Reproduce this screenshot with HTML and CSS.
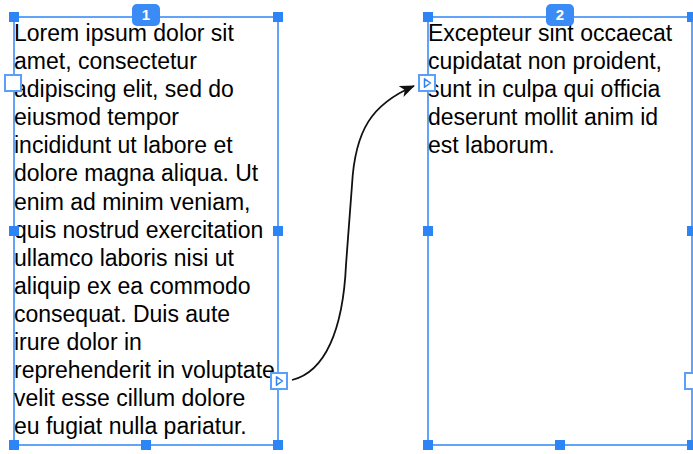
FILE: index.html
```html
<!DOCTYPE html>
<html lang="en">
<head>
  <meta charset="UTF-8">
  <title>Linked Text Boxes</title>
  <link rel="stylesheet" href="styles.css">
</head>
<body>

  <div class="canvas">
    <div class="frame">
      <p class="text">Lorem ipsum dolor sit amet, consectetur adipiscing elit, sed do eiusmod tempor incididunt ut labore et dolore magna aliqua. Ut enim ad minim veniam, quis nostrud exercitation ullamco laboris nisi ut aliquip ex ea commodo consequat. Duis aute irure dolor in reprehenderit in voluptate velit esse cillum dolore eu fugiat nulla pariatur.</p>
      <span class="handle tl"></span>
      <span class="handle tr"></span>
      <span class="handle ml"></span>
      <span class="handle mr"></span>
      <span class="handle bl"></span>
      <span class="handle bm"></span>
      <span class="handle br"></span>
      <span class="port port-in"></span>
      <span class="port port-out">
        <svg viewBox="0 0 14 14"><polygon points="4.5,2.8 10.5,7 4.5,11.2"/></svg>
      </span>
      <span class="badge">1</span>
    </div>

    <div class="frame">
      <p class="text">Excepteur sint occaecat cupidatat non proident, sunt in culpa qui officia deserunt mollit anim id est laborum.</p>
      <span class="handle tl"></span>
      <span class="handle tr"></span>
      <span class="handle ml"></span>
      <span class="handle mr"></span>
      <span class="handle bl"></span>
      <span class="handle bm"></span>
      <span class="handle br"></span>
      <span class="port port-in">
        <svg viewBox="0 0 14 14"><polygon points="4.5,2.8 10.5,7 4.5,11.2"/></svg>
      </span>
      <span class="port port-out"></span>
      <span class="badge">2</span>
    </div>

    <!-- thread from box 1 to box 2 -->
    <svg class="link" width="693" height="454" viewBox="0 0 693 454">
      <defs>
        <marker id="head" markerUnits="userSpaceOnUse" markerWidth="15" markerHeight="12" viewBox="0 0 15 12" refX="14" refY="6" orient="auto">
          <path d="M0,0 L15,6 L0,12 L4,6 Z"/>
        </marker>
      </defs>
      <path d="M292,380 C325,372 343,330 346,265 C348,238 350,210 352,185 C355,130 372,104 414,86" marker-end="url(#head)"/>
    </svg>
  </div>

</body>
</html>
```

FILE: styles.css
```css
html, body {
  margin: 0;
  overflow: hidden;
  background: #fff;
}

.canvas {
  position: relative;
  display: flex;
  gap: 148px;
  height: 454px;
  padding: 16px 0 0 13px;
  box-sizing: border-box;
}

.frame {
  position: relative;
  width: 266px;
  height: 430px;
  flex-shrink: 0;
  box-sizing: border-box;
  border: 2px solid #62a4f9;
}

.text {
  width: 262px;
  margin: 0 0 0 -1px;
  padding-top: 1px;
  font-family: "Liberation Sans", Arial, sans-serif;
  font-size: 23px;
  line-height: 28.1px;
  color: #000;
}

.handle {
  position: absolute;
  width: 10px;
  height: 10px;
  background: #2d85f5;
}

.handle.tl { left: -6px; top: -6px; }
.handle.tr { right: -6px; top: -6px; }
.handle.ml { left: -6px; top: calc(50% - 5px); }
.handle.mr { right: -6px; top: calc(50% - 5px); }
.handle.bl { left: -6px; bottom: -6px; }
.handle.bm { left: calc(50% - 5px); bottom: -6px; }
.handle.br { right: -6px; bottom: -6px; }

.port {
  position: absolute;
  left: -11px;
  width: 18px;
  height: 18px;
  box-sizing: border-box;
  border: 2px solid #5a9ff8;
  background: #fff;
}

.port-in { top: 56px; }
.port-out { bottom: 54px; left: auto; right: -11px; }

.port svg {
  display: block;
  width: 14px;
  height: 14px;
}

.port polygon {
  fill: none;
  stroke: #2d85f5;
  stroke-width: 1.5;
  stroke-linejoin: round;
}

.badge {
  position: absolute;
  top: -14px;
  left: calc(50% - 14px);
  width: 28px;
  height: 22px;
  border-radius: 5px;
  background: #3a8bf5;
  color: #fff;
  font-family: "Liberation Sans", Arial, sans-serif;
  font-weight: bold;
  font-size: 15px;
  line-height: 22px;
  text-align: center;
}

.link {
  position: absolute;
  top: 0;
  left: 0;
  pointer-events: none;
}

.link path {
  fill: none;
  stroke: #111;
  stroke-width: 1.8;
}

.link marker path {
  fill: #111;
  stroke: none;
}
```
